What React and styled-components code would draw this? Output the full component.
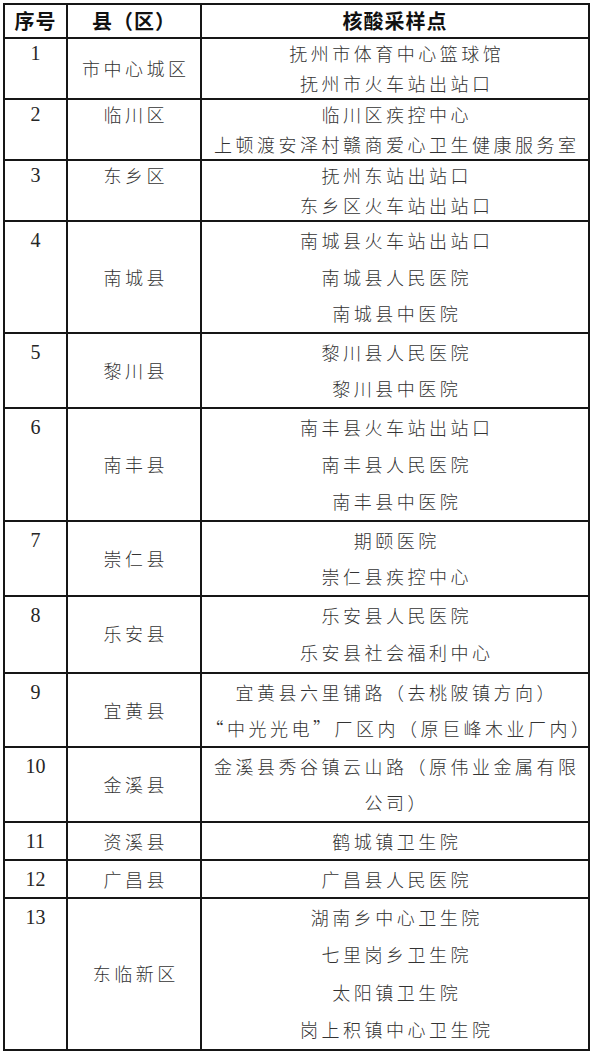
import styled, { createGlobalStyle } from 'styled-components'

// heights are the row pitch minus the collapsed border
const rows = [
  { no: '1', county: '市中心城区', height: 59, lh: 29.5, sites: ['抚州市体育中心篮球馆', '抚州市火车站出站口'] },
  { no: '2', county: '临川区', height: 59, lh: 29.5, top: true, sites: ['临川区疾控中心', '上顿渡安泽村赣商爱心卫生健康服务室'] },
  { no: '3', county: '东乡区', height: 59, lh: 29.5, top: true, sites: ['抚州东站出站口', '东乡区火车站出站口'] },
  { no: '4', county: '南城县', height: 110, lh: 36.5, sites: ['南城县火车站出站口', '南城县人民医院', '南城县中医院'] },
  { no: '5', county: '黎川县', height: 73, lh: 36.5, sites: ['黎川县人民医院', '黎川县中医院'] },
  { no: '6', county: '南丰县', height: 112, lh: 37, sites: ['南丰县火车站出站口', '南丰县人民医院', '南丰县中医院'] },
  { no: '7', county: '崇仁县', height: 73, lh: 36.5, sites: ['期颐医院', '崇仁县疾控中心'] },
  { no: '8', county: '乐安县', height: 76, lh: 37.5, sites: ['乐安县人民医院', '乐安县社会福利中心'] },
  { no: '9', county: '宜黄县', height: 72, lh: 36, sites: ['宜黄县六里铺路（去桃陂镇方向）', '“中光光电”厂区内（原巨峰木业厂内）'] },
  { no: '10', county: '金溪县', height: 73, lh: 36.5, sites: ['金溪县秀谷镇云山路（原伟业金属有限', '公司）'] },
  { no: '11', county: '资溪县', height: 36, lh: 36, sites: ['鹤城镇卫生院'] },
  { no: '12', county: '广昌县', height: 36, lh: 36, sites: ['广昌县人民医院'] },
  { no: '13', county: '东临新区', height: 150, lh: 37.5, sites: ['湖南乡中心卫生院', '七里岗乡卫生院', '太阳镇卫生院', '岗上积镇中心卫生院'] },
]

export default function App() {
  return (
    <>
      <GlobalStyle />
      <Page>
        <Table>
          <colgroup>
            <col style={{ width: 63 }} />
            <col style={{ width: 134 }} />
            <col style={{ width: 388 }} />
          </colgroup>
          <thead>
            <tr>
              <HeadCell>序号</HeadCell>
              <HeadCell>县（区）</HeadCell>
              <HeadCell>核酸采样点</HeadCell>
            </tr>
          </thead>
          <tbody>
            {rows.map((row) => (
              <Row key={row.no} $height={row.height}>
                <NumberCell $lh={row.lh}>{row.no}</NumberCell>
                <CountyCell $lh={row.lh} $top={row.top}>
                  {row.county}
                </CountyCell>
                <SiteCell $lh={row.lh}>
                  {row.sites.map((site) => (
                    <SiteLine key={site}>{site}</SiteLine>
                  ))}
                </SiteCell>
              </Row>
            ))}
          </tbody>
        </Table>
      </Page>
    </>
  )
}

const GlobalStyle = createGlobalStyle`
  body {
    margin: 0;
    background: #fff;
    font-family: "Noto Sans CJK SC", "Liberation Serif", serif;
  }
`

const Page = styled.div`
  padding: 3px 0 0 3px;
  width: 595px;
  box-sizing: border-box;
`

const Table = styled.table`
  border-collapse: collapse;
  table-layout: fixed;
  width: 587px;

  td,
  th {
    border: 2px solid #161616;
    padding: 0;
  }
`

const HeadCell = styled.th`
  height: 32px;
  font-family: "Noto Sans CJK SC", sans-serif;
  font-weight: 700;
  font-size: 20px;
  letter-spacing: 1px;
  color: #111;
  text-align: center;
  vertical-align: middle;
  line-height: 32px;
`

const Row = styled.tr`
  height: ${(p) => p.$height}px;
`

const NumberCell = styled.td`
  font-family: "Liberation Serif", serif;
  font-size: 20px;
  color: #262626;
  text-align: center;
  vertical-align: top;
  line-height: ${(p) => p.$lh}px;
`

const CountyCell = styled.td`
  font-family: "Noto Sans CJK SC", sans-serif;
  font-size: 18px;
  font-weight: 300;
  letter-spacing: 3.5px;
  padding-left: 3.5px !important;
  color: #333;
  text-align: center;
  vertical-align: ${(p) => (p.$top ? 'top' : 'middle')};
  line-height: ${(p) => p.$lh}px;
`

const SiteCell = styled.td`
  font-family: "Noto Sans CJK SC", sans-serif;
  font-size: 18px;
  font-weight: 300;
  letter-spacing: 3.5px;
  padding-left: 3.5px !important;
  color: #333;
  text-align: center;
  vertical-align: top;
  line-height: ${(p) => p.$lh}px;
`

const SiteLine = styled.div`
  white-space: nowrap;
`
